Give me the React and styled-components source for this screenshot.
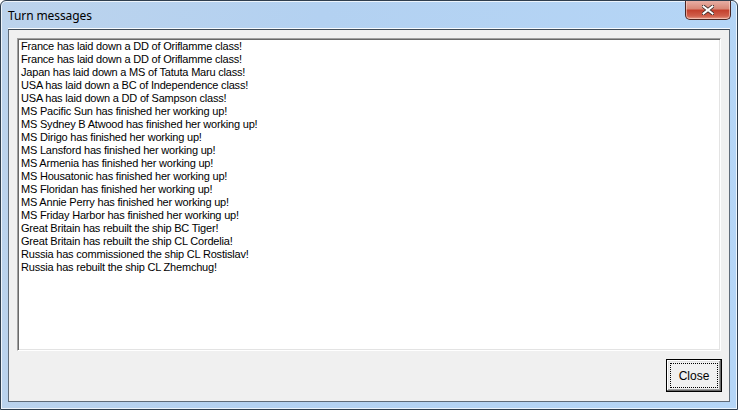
import React from 'react';
import styled, { createGlobalStyle } from 'styled-components';

const Global = createGlobalStyle`
    html, body {
        margin: 0;
        padding: 0;
        background: #ffffff;
    }
    body {
        width: 738px;
        height: 410px;
        overflow: hidden;
    }
`;

const Window = styled.div`
    box-sizing: border-box;
    width: 738px;
    height: 410px;
    display: flex;
    flex-direction: column;
    border: 1px solid #2f3e4e;
    border-radius: 6px 6px 0 0;
    background: linear-gradient(100deg, #bcd3ec 0%, #b3d1f1 40%, #b5d6f7 100%);
    box-shadow: inset 0 0 0 1px rgba(255, 255, 255, 0.75);
    overflow: hidden;
`;

const TitleBar = styled.div`
    height: 28px;
    display: flex;
    align-items: flex-start;
    justify-content: space-between;
    padding: 0 7px 0 7px;
    flex-shrink: 0;
`;

const Title = styled.span`
    font-family: "Noto Sans", "Open Sans", sans-serif;
    font-size: 12px;
    color: #000000;
    margin-top: 6px;
    letter-spacing: -0.1px;
`;

const CloseX = styled.div`
    box-sizing: border-box;
    width: 46px;
    height: 20px;
    margin-top: -1px;
    margin-right: -1px;
    display: flex;
    align-items: center;
    justify-content: center;
    border: 1px solid #4a2623;
    border-top: none;
    border-radius: 0 0 5px 5px;
    background: linear-gradient(180deg, #e9b3aa 0%, #d98978 45%, #c4412e 55%, #d0604c 85%, #e8a08e 100%);
    box-shadow: inset 0 0 0 1px rgba(255, 220, 210, 0.55);
`;

const Client = styled.div`
    flex: 1;
    margin: 0 7px 7px 7px;
    display: flex;
    flex-direction: column;
    border: 1px solid #5f6b78;
    border-top-color: #3f4b58;
    background: #f0f0f0;
    padding: 8px 8px 9px 8px;
    box-shadow: 0 -1px 0 rgba(255, 255, 255, 0.9);
`;

const ListBox = styled.div`
    flex: 1;
    background: #ffffff;
    border-top: 1px solid #a0a0a0;
    border-left: 1px solid #a0a0a0;
    border-right: 1px solid #ffffff;
    border-bottom: 1px solid #ffffff;
    box-shadow: inset 1px 1px 0 #696969, inset -1px -1px 0 #e3e3e3;
    padding: 1px 3px;
    overflow: hidden;
`;

const Line = styled.div`
    font-family: "Liberation Sans", Arial, sans-serif;
    font-size: 11px;
    letter-spacing: -0.2px;
    line-height: 13px;
    color: #000000;
    white-space: nowrap;
`;

const Footer = styled.div`
    display: flex;
    justify-content: flex-end;
    padding-top: 8px;
`;

const Button = styled.button`
    box-sizing: border-box;
    width: 56px;
    height: 33px;
    margin-right: -1px;
    padding: 3px;
    background: #f0f0f0;
    border: 1px solid #000000;
    box-shadow: inset -1px -1px 0 #696969, inset 1px 1px 0 #ffffff, inset -2px -2px 0 #a0a0a0, inset 2px 2px 0 #e3e3e3;
    font-family: "Liberation Sans", Arial, sans-serif;
    font-size: 12px;
    color: #000000;
    display: flex;
    cursor: pointer;
`;

const FocusRing = styled.span`
    flex: 1;
    display: flex;
    align-items: center;
    justify-content: center;
    border: 1px dotted #000000;
`;

const messages = [
    'France has laid down a DD of Oriflamme class!',
    'France has laid down a DD of Oriflamme class!',
    'Japan has laid down a MS of Tatuta Maru class!',
    'USA has laid down a BC of Independence class!',
    'USA has laid down a DD of Sampson class!',
    'MS Pacific Sun has finished her working up!',
    'MS Sydney B Atwood has finished her working up!',
    'MS Dirigo has finished her working up!',
    'MS Lansford has finished her working up!',
    'MS Armenia has finished her working up!',
    'MS Housatonic has finished her working up!',
    'MS Floridan has finished her working up!',
    'MS Annie Perry has finished her working up!',
    'MS Friday Harbor has finished her working up!',
    'Great Britain has rebuilt the ship BC Tiger!',
    'Great Britain has rebuilt the ship CL Cordelia!',
    'Russia has commissioned the ship CL Rostislav!',
    'Russia has rebuilt the ship CL Zhemchug!',
];

const App = () => {
    return (
        <>
            <Global />
            <Window>
                <TitleBar>
                    <Title>Turn messages</Title>
                    <CloseX>
                        <svg width="12" height="10" viewBox="0 0 12 10">
                            <path d="M1 1 L11 9 M11 1 L1 9" stroke="#3a2a28" strokeWidth="3.6" strokeLinecap="square" />
                            <path d="M1.5 1.5 L10.5 8.5 M10.5 1.5 L1.5 8.5" stroke="#ffffff" strokeWidth="2" strokeLinecap="square" />
                        </svg>
                    </CloseX>
                </TitleBar>
                <Client>
                    <ListBox>
                        {messages.map((m, i) => (
                            <Line key={i}>{m}</Line>
                        ))}
                    </ListBox>
                    <Footer>
                        <Button>
                            <FocusRing>Close</FocusRing>
                        </Button>
                    </Footer>
                </Client>
            </Window>
        </>
    );
};

export default App;
